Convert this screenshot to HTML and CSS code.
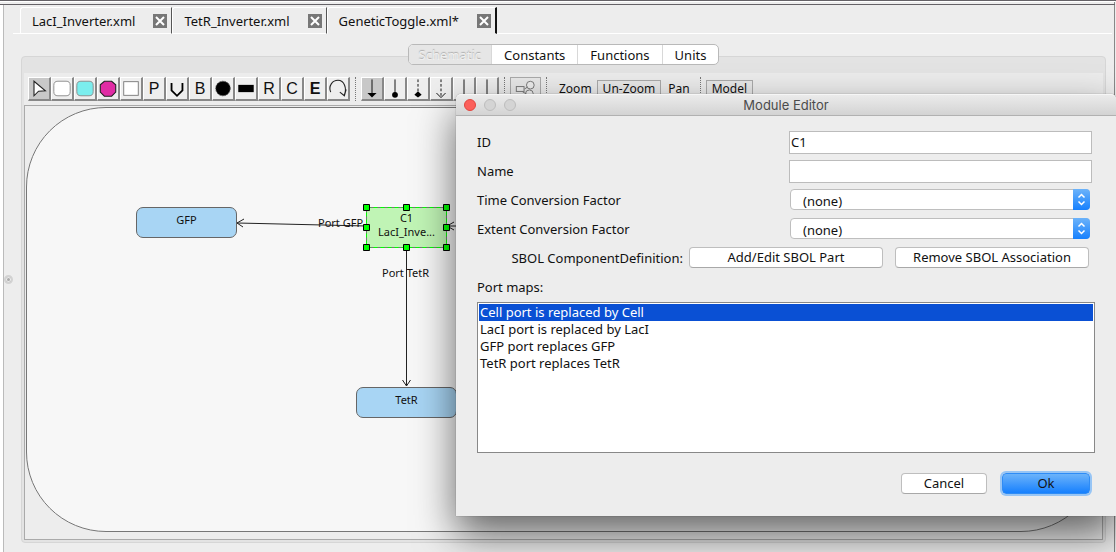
FILE: index.html
```html
<!DOCTYPE html>
<html lang="en">
<head>
<meta charset="utf-8">
<title>Module Editor</title>
<link rel="stylesheet" href="styles.css">
</head>
<body>
<div class="app">
  <div class="side"></div>
  <div class="splitter"><span class="grip"></span></div>
  <main class="workspace">
    <nav class="file-tabs">
      <div class="file-tab"><span>LacI_Inverter.xml</span><button class="close" aria-label="Close LacI_Inverter.xml"><svg viewBox="0 0 14 14"><path d="M3 3l8 8M11 3l-8 8"/></svg></button></div>
      <div class="file-tab"><span>TetR_Inverter.xml</span><button class="close" aria-label="Close TetR_Inverter.xml"><svg viewBox="0 0 14 14"><path d="M3 3l8 8M11 3l-8 8"/></svg></button></div>
      <div class="file-tab active"><span>GeneticToggle.xml*</span><button class="close" aria-label="Close GeneticToggle.xml"><svg viewBox="0 0 14 14"><path d="M3 3l8 8M11 3l-8 8"/></svg></button></div>
      <div class="tab-rest"></div>
    </nav>
    <div class="views">
      <button class="view current">Schematic</button><button class="view">Constants</button><button class="view">Functions</button><button class="view">Units</button>
    </div>
    <section class="panel">
      <div class="toolbar">
        <div class="tools">
          <button class="tool on" aria-label="Select"><svg viewBox="0 0 22 22"><path d="M5.500 3v16l5-5 7.500-.5z" fill="#fff" stroke="#222" stroke-width="1.200"/></svg></button>
          <button class="tool" aria-label="Add compartment"><svg viewBox="0 0 22 22"><rect x="2" y="3" width="18" height="16" rx="4.500" fill="#fff" stroke="#888"/></svg></button>
          <button class="tool" aria-label="Add species"><svg viewBox="0 0 22 22"><rect x="2" y="3" width="18" height="16" rx="4.500" fill="#7beeee" stroke="#888"/></svg></button>
          <button class="tool" aria-label="Add reaction"><svg viewBox="0 0 22 22"><path d="M7 3h8l4.500 4v8L15 19.500H7L2.500 15V7z" fill="#e02ca4" stroke="#222" stroke-width="1.200"/></svg></button>
          <button class="tool" aria-label="Add module"><svg viewBox="0 0 22 22"><rect x="3" y="3.500" width="16" height="15" fill="#fff" stroke="#777"/></svg></button>
          <button class="tool letter">P</button>
          <button class="tool" aria-label="Add variable"><svg viewBox="0 0 22 22"><path d="M5 5v8l6 6 6-6V5" fill="none" stroke="#000" stroke-width="2"/></svg></button>
          <button class="tool letter">B</button>
          <button class="tool" aria-label="Add self promoter"><svg viewBox="0 0 22 22"><circle cx="11" cy="11" r="8" stroke="#555" stroke-dasharray="2 1"/></svg></button>
          <button class="tool" aria-label="Add promoter"><svg viewBox="0 0 22 22"><path d="M2.500 7h17v8h-17z"/></svg></button>
          <button class="tool letter">R</button>
          <button class="tool letter">C</button>
          <button class="tool letter bold">E</button>
          <button class="tool" aria-label="Add event"><svg viewBox="0 0 22 22"><path d="M3 15C0 8 5 2 11 2c7 0 10 9 7 16m-5-3 5 4 2-7" fill="none" stroke="#222" stroke-width="1.200"/></svg></button>
        </div>
        <span class="sep"></span>
        <div class="tools">
          <button class="tool on" aria-label="Activation"><svg viewBox="0 0 22 22"><path d="M11 1v16" stroke="#000"/><path d="M6 16h10l-5 5z"/></svg></button>
          <button class="tool" aria-label="Influence"><svg viewBox="0 0 22 22"><path d="M11 1v16" stroke="#000"/><circle cx="11" cy="18" r="3.200"/></svg></button>
          <button class="tool" aria-label="Modifier"><svg viewBox="0 0 22 22"><path d="M11 1v13" stroke="#000" stroke-dasharray="3 2"/><path d="M11 14l4 4-4 3-4-3z"/></svg></button>
          <button class="tool" aria-label="Dependency"><svg viewBox="0 0 22 22"><path d="M11 1v19" stroke="#000" stroke-dasharray="3 2"/><path d="M6 16l5 5 5-5" fill="none" stroke="#000"/></svg></button>
          <button class="tool" aria-label="Production"><svg viewBox="0 0 22 22"><path d="M11 1v21" stroke="#000"/></svg></button>
          <button class="tool" aria-label="Complex"><svg viewBox="0 0 22 22"><path d="M11 1v21" stroke="#000"/></svg></button>
        </div>
        <span class="sep"></span>
        <button class="flat layout" aria-label="Layout"><svg viewBox="0 0 30 22"><rect x="5.500" y="8.500" width="8" height="5"/><circle cx="20" cy="7" r="4"/><circle cx="19" cy="16" r="4"/><path d="M14 11l3-2m-5 5 4 2"/></svg></button>
        <span class="sep"></span>
        <button class="plain">Zoom</button><button class="flat">Un-Zoom</button><button class="plain">Pan</button>
        <span class="sep"></span>
        <button class="flat">Model</button>
      </div>
      <div class="canvas">
        <div class="compartment">
          <svg class="edges" width="440" height="320">
            <g fill="none" stroke="#222"><path d="M340 119L211 116m7-4-7 4 6 4"/><path d="M380.500 141v138m-4-6 4 6 4-6"/><path d="M440 119h-19m7-4-7 4 7 4"/></g>
          </svg>
          <div class="node gfp">GFP</div>
          <div class="node tetr">TetR</div>
          <div class="node module">C1<br>LacI_Inve...</div>
          <span class="edge-label to-gfp">Port GFP</span>
          <span class="edge-label to-tetr">Port TetR</span>
          <svg class="edges" width="440" height="320">
            <rect x="340.500" y="100.500" width="80" height="40" fill="none" stroke="#777"/>
            <rect x="340.500" y="100.500" width="80" height="40" fill="none" stroke="#0f0" stroke-dasharray="4 3"/>
            <g fill="#0f0" stroke="#000"><path d="M337.500 97.500h6v6h-6zM377.500 97.500h6v6h-6zM417.500 97.500h6v6h-6zM337.500 117.500h6v6h-6zM417.500 117.500h6v6h-6zM337.500 137.500h6v6h-6zM377.500 137.500h6v6h-6zM417.500 137.500h6v6h-6z"/></g>
          </svg>
        </div>
      </div>
    </section>
  </main>
</div>
<div class="dialog" role="dialog" aria-labelledby="dialog-title">
  <header class="titlebar">
    <div class="lights"><button class="light red" aria-label="Close"></button><button class="light" aria-label="Minimise"></button><button class="light" aria-label="Zoom window"></button></div>
    <h1 class="title" id="dialog-title">Module Editor</h1>
  </header>
  <form class="form">
    <div class="field"><label for="id">ID</label><input class="text" id="id" value="C1"></div>
    <div class="field"><label for="name">Name</label><input class="text" id="name"></div>
    <div class="field"><label for="time">Time Conversion Factor</label>
      <div class="picker"><select id="time"><option>(none)</option></select><svg viewBox="0 0 17 21"><path d="M5.500 8.500l3-3 3 3M5.500 12.500l3 3 3-3"/></svg></div></div>
    <div class="field"><label for="extent">Extent Conversion Factor</label>
      <div class="picker"><select id="extent"><option>(none)</option></select><svg viewBox="0 0 17 21"><path d="M5.500 8.500l3-3 3 3M5.500 12.500l3 3 3-3"/></svg></div></div>
    <div class="sbol"><span class="sbol-label">SBOL ComponentDefinition:</span><button type="button" class="push wide">Add/Edit SBOL Part</button><button type="button" class="push wide">Remove SBOL Association</button></div>
    <div class="maps-label" id="maps">Port maps:</div>
    <ul class="maps" role="listbox" aria-labelledby="maps">
      <li role="option" aria-selected="true" class="selected">Cell port is replaced by Cell</li>
      <li role="option">LacI port is replaced by LacI</li>
      <li role="option">GFP port replaces GFP</li>
      <li role="option">TetR port replaces TetR</li>
    </ul>
    <div class="actions"><button type="button" class="push">Cancel</button><button type="button" class="push primary">Ok</button></div>
  </form>
</div>
</body>
</html>
```
FILE: styles.css
```css
* { box-sizing: border-box; }
body {
  margin: 0;
  background: #ededed;
  color: #111;
  font: 13px/16px "Noto Sans", "Open Sans", sans-serif;
  overflow: hidden;
}
button, input, select { font: inherit; color: inherit; margin: 0; padding: 0; border: 0; background: none; }
svg { display: block; }

.app {
  display: flex;
  min-height: 100vh;
  border-top: 1px solid #656267;
}
.side { width: 4px; margin-top: 3px; background: #fff; border-right: 1px solid #bbb; }
.splitter { display: flex; align-items: center; width: 9px; padding-top: 5px; }
.grip { width: 9px; height: 9px; border: 2px solid #d2d2d2; border-radius: 5px; background: #aaa; box-shadow: inset 0 0 0 1px #eee; }
.app::before {
  content: "";
  position: absolute;
  top: 1px;
  left: 0;
  right: 1px;
  height: 2px;
  border-top: 1px solid #fff;
  border-bottom: 1px solid #656267;
}
.workspace {
  display: flex;
  flex-direction: column;
  flex: 1;
  padding: 6px 0 9px;
  margin-right: 1px;
  border-right: 1px solid #888;
}

.file-tabs { display: flex; padding-right: 2px; }
.file-tabs::before { content: ""; width: 7px; border-bottom: 1px solid #fff; }
.file-tab {
  display: flex;
  align-items: center;
  gap: 18px;
  height: 27px;
  padding: 0 4px 0 11px;
  border: 1px solid #fff;
  border-right-color: #555;
  border-top-left-radius: 3px;
}
.file-tab.active { border-right: 2px solid #111; border-bottom-color: #ededed; }
.tab-rest { flex: 1; border-bottom: 1px solid #fff; }
.close { width: 14px; height: 14px; background: #777; }
.close path { fill: none; stroke: #fff; stroke-width: 2; }

.views {
  display: flex;
  align-self: center;
  z-index: 1;
  height: 21px;
  margin: 10px 0 -9px;
  border: 1px solid #b9b9b9;
  border-radius: 5px;
  background: #fff;
  overflow: hidden;
}
.view { padding: 0 12px; border-left: 1px solid #d8d8d8; }
.view.current { padding: 0 10px; border: 0; background: #e6e6e6; color: #f0f0f0; text-shadow: 0 -1px 1px #aaa; }

.panel {
  display: flex;
  flex-direction: column;
  flex: 1;
  margin: 0 8px;
  padding: 16px 2px 2px;
  border: 1px solid #d6d6d6;
  border-radius: 4px;
  background: #e3e3e3;
}
.toolbar {
  display: flex;
  align-items: flex-start;
  height: 32px;
  padding: 4px;
  background: #ececec;
  font-size: 12px;
}
.tools { display: flex; }
.tool {
  width: 23px;
  height: 24px;
  border: 1px solid #fff;
  border-right: 2px solid #888;
  border-bottom: 2px solid #888;
  background: #eee;
}
.tool svg { width: 20px; height: 21px; }
.tool.on { background: #c8c8c8; }
.tool.letter { font: 16px/21px "Liberation Sans", sans-serif; }
.tool.bold { font-weight: bold; }
.sep { width: 1px; height: 24px; margin: 0 5px; border-left: 1px dotted #777; }
.flat { height: 18px; margin-top: 3px; padding: 0 5px; border: 1px solid #aaa; background: #e8e8e8; }
.plain { height: 18px; margin-top: 3px; padding: 0 5px 0 7px; }
.layout { width: 31px; height: 24px; margin-top: 0; padding: 0; }
.layout svg { width: 29px; height: 22px; fill: #eee; stroke: #777; }

.canvas { display: flex; flex: 1; padding: 1px 1px 7px; border: 1px solid #aaa; background: #ededed; }
.compartment { position: relative; flex: 1; border: 1px solid #777; border-radius: 80px; background: #f7f7f7; font-size: 11px; line-height: 14px; }
.edges { position: absolute; left: -1px; top: -1px; }
.node { position: absolute; width: 101px; height: 31px; padding-top: 5px; border: 1px solid #666; border-radius: 7px; background: #a8d5f4; text-align: center; }
.gfp { left: 109px; top: 99px; }
.tetr { left: 329px; top: 279px; }
.module { left: 339px; top: 99px; width: 81px; height: 41px; padding-top: 4px; border: 0; border-radius: 0; background: #c0f4b5; }
.edge-label { position: absolute; white-space: nowrap; }
.to-gfp { left: 291px; top: 108px; }
.to-tetr { left: 355px; top: 158px; }

.dialog {
  position: absolute;
  z-index: 2;
  left: 456px;
  right: 0;
  top: 94px;
  border-radius: 5px 5px 0 0;
  background: #ededed;
  box-shadow: 0 0 1px rgba(0, 0, 0, .6), 0 18px 40px rgba(0, 0, 0, .6);
}
.titlebar {
  display: grid;
  grid-template-columns: 1fr auto 1fr;
  align-items: center;
  height: 22px;
  padding: 0 8px;
  border-top: 1px solid #f6f6f6;
  border-bottom: 1px solid #b1b1b1;
  border-radius: 5px 5px 0 0;
  background: linear-gradient(#ebebeb, #d3d3d3);
}
.lights { display: flex; gap: 8px; }
.light { width: 12px; height: 12px; border: 1px solid #bdbdbd; border-radius: 50%; background: #d4d4d4; }
.light.red { border-color: #e2463f; background: #fc605b; }
.title { margin: 0; font: 13px/20px Inter, sans-serif; color: #4b4b4b; }
.form { padding: 15px 21px 22px; }
.field { display: grid; grid-template-columns: 312px 1fr; align-items: start; height: 23px; margin: 0 3px 6px 0; line-height: 22px; }
.text { width: 100%; height: 23px; padding: 0 1px 2px; border: 1px solid #bcbcbc; background: #fff; }
.picker { position: relative; margin: 0 2px 0 1px; }
.picker select {
  display: block;
  width: 100%;
  height: 21px;
  padding: 0 12px 1px;
  appearance: none;
  border: 1px solid #bebebe;
  border-radius: 4px;
  background: #fff;
}
.picker svg {
  position: absolute;
  top: 0;
  right: 0;
  width: 17px;
  height: 21px;
  border-radius: 0 4px 4px 0;
  background: linear-gradient(#6cb3fa, #1680fe);
  fill: none;
  stroke: #fff;
  stroke-width: 1.5;
  pointer-events: none;
}
.sbol { display: flex; justify-content: flex-end; align-items: flex-start; height: 23px; margin-right: 6px; }
.sbol-label { margin-right: 6px; line-height: 22px; }
.push { width: 86px; height: 21px; padding-bottom: 1px; border: 1px solid #bebebe; border-bottom-color: #a8a8a8; border-radius: 4px; background: #fff; }
.push.wide { width: 194px; }
.wide + .wide { margin-left: 12px; }
.push.primary { width: 88px; border-color: #2f8cf5; background: linear-gradient(#6cb3fa, #1680fe); box-shadow: 0 0 0 2px #97c5f5; }
.maps-label { margin: 9px 0 7px; }
.maps { height: 151px; margin: 0; padding: 1px; border: 1px solid #888; background: #fff; list-style: none; line-height: 17px; }
.maps li { padding: 0 1px; }
.maps .selected { background: #0a50d4; color: #fff; }
.actions { display: flex; justify-content: flex-end; gap: 15px; margin: 20px 5px 0 0; }
```
